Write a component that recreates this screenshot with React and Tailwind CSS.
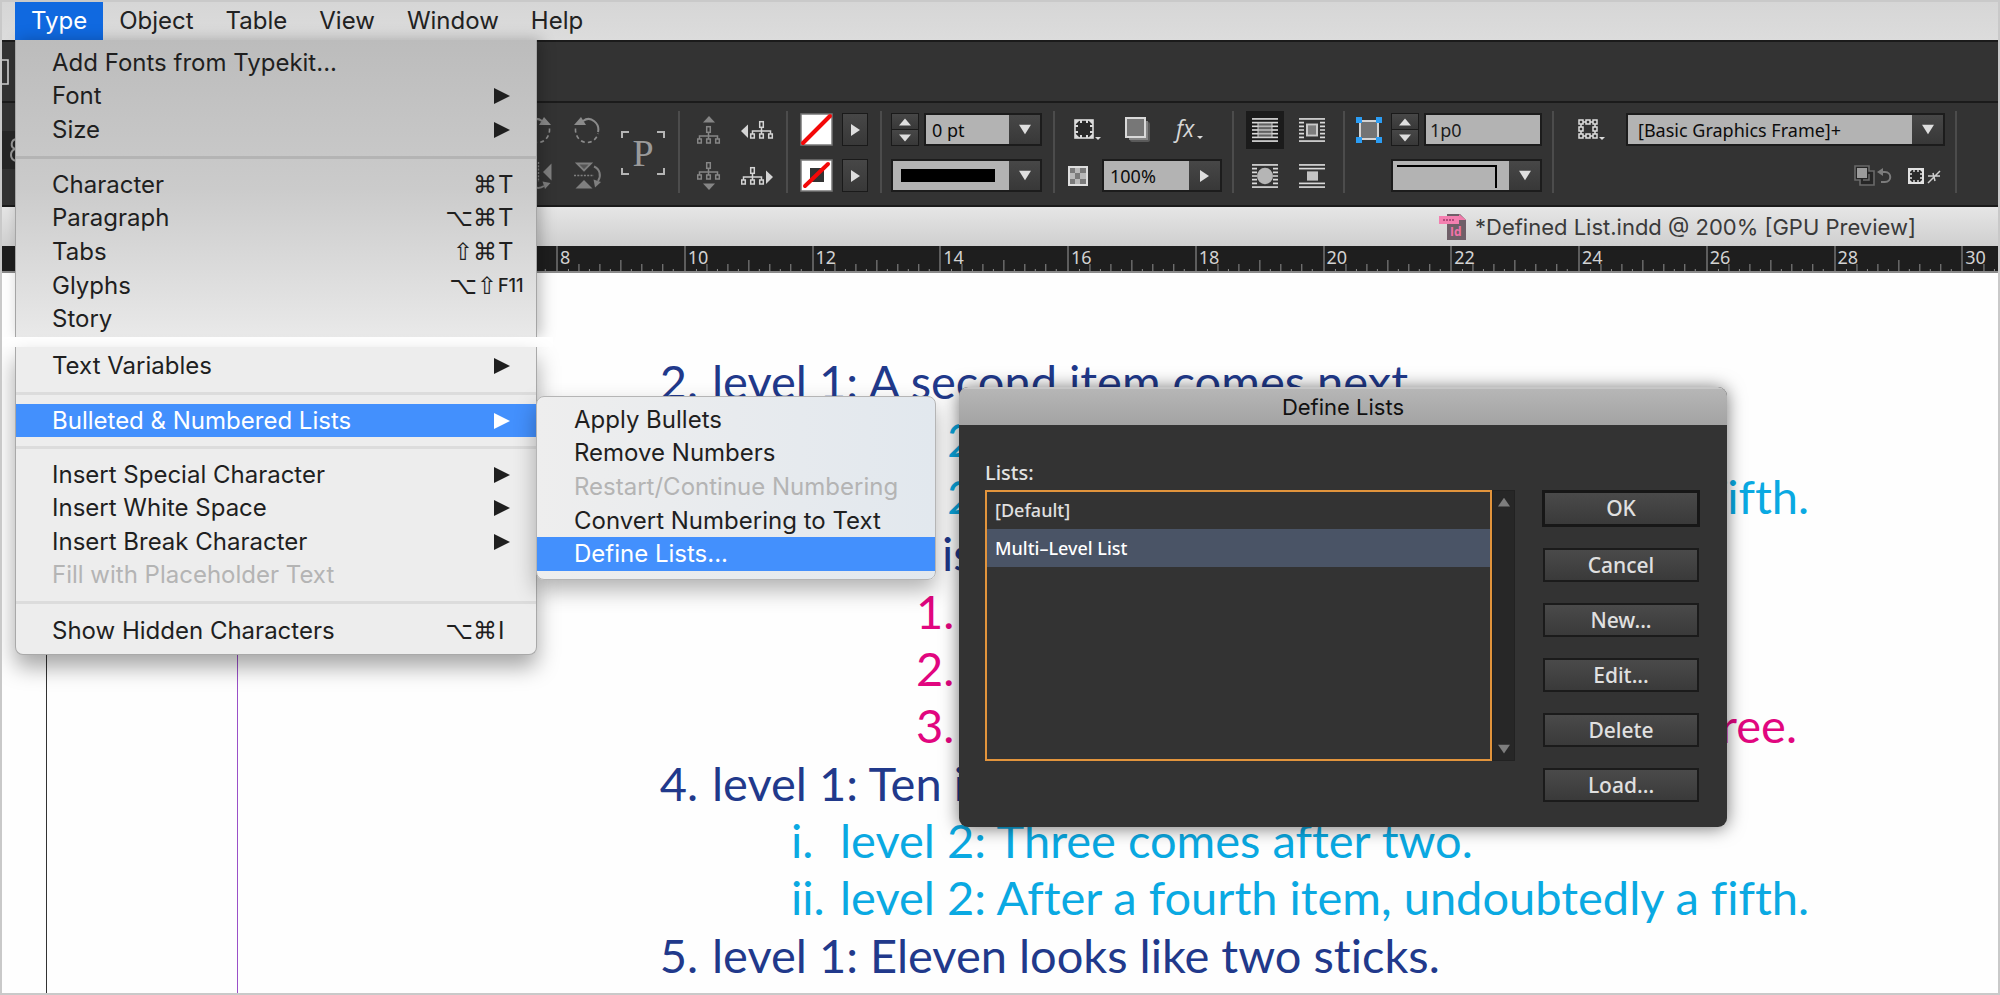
import React from "react";

const UI = "font-['Noto_Sans','Open_Sans',sans-serif]";
const MENU = "font-['Inter','Roboto',sans-serif]";
const PAGE = "font-['Lato','Open_Sans',sans-serif]";

/* ---------- small drawings ---------- */

function Triangle({ dir = "right", className = "" }) {
  const points = {
    right: "0,0 16,8 0,16",
    down: "0,1 16,1 8,15",
    up: "0,15 16,15 8,1",
  }[dir];
  return (
    <svg viewBox="0 0 16 16" preserveAspectRatio="none" className={`fill-current ${className}`} aria-hidden="true">
      <polygon points={points} />
    </svg>
  );
}

function RotateIcon({ flip }) {
  return (
    <svg width="26" height="28" viewBox="0 0 26 28" className="text-[#8b8b8b]" aria-hidden="true">
      <g transform={flip ? "translate(26 0) scale(-1 1)" : undefined} fill="none" stroke="currentColor">
        <path d="M9 5C17-1 26 8 24 16" strokeWidth="2" />
        <path d="M1.500 12.500C1 20 6 26.500 13 26.500C19 26.500 23 22 24 17.500" strokeWidth="1.600" strokeDasharray="4 3" />
        <path d="M0 9L7 1L12 9Z" fill="currentColor" stroke="none" />
      </g>
    </svg>
  );
}

function FlipIcon({ horizontal }) {
  return (
    <svg width="28" height="28" viewBox="0 0 28 28" className="text-[#7f7f7f]" aria-hidden="true">
      <g transform={horizontal ? "matrix(0 1 1 0 0 0)" : undefined} fill="none" stroke="currentColor">
        <path d="M3 1.500H17L10 8.500Z" fill="#555" strokeWidth="1.800" />
        <path d="M1.500 26.500H18.500L10 18Z" fill="currentColor" stroke="none" />
        <path d="M0 13.500H20" strokeWidth="1.300" strokeDasharray="2 1.300" />
        <path d="M20 4.500C26 7 27.500 14 24 19" strokeWidth="2" />
        <path d="M19.500 17.500L27 20L21 25.500Z" fill="currentColor" stroke="none" />
      </g>
    </svg>
  );
}

function ParagraphFrame() {
  return (
    <svg width="44" height="44" viewBox="0 0 44 44" aria-hidden="true">
      <path d="M1 7V1H8M36 1H43V7M43 37V43H36M8 43H1V37" fill="none" stroke="#b5b5b5" strokeWidth="2" />
      <text x="22" y="35" textAnchor="middle" fontSize="38" fill="#9a9a9a" fontFamily="'Liberation Serif', serif">
        P
      </text>
    </svg>
  );
}

function TreeShape({ x, y }) {
  return (
    <g transform={`translate(${x} ${y})`} fill="none" stroke="currentColor" strokeWidth="1.500">
      <rect x="9.700" y="0.700" width="3.600" height="5.600" />
      <path d="M11.500 6.500V10M2.500 13V10H20.500V13M11.500 10V13" />
      <rect x="0.700" y="13" width="3.600" height="4" />
      <rect x="9.700" y="13" width="3.600" height="4" />
      <rect x="18.700" y="13" width="3.600" height="4" />
    </g>
  );
}

function TreeIcon({ dir }) {
  if (dir === "up")
    return (
      <svg width="24" height="28" viewBox="0 0 24 28" className="text-[#868686]" aria-hidden="true">
        <path d="M6 6.500H18L12 0Z" fill="currentColor" />
        <TreeShape x={0} y={10} />
      </svg>
    );
  if (dir === "down")
    return (
      <svg width="24" height="28" viewBox="0 0 24 28" className="text-[#868686]" aria-hidden="true">
        <path d="M6 21.500H18L12 28Z" fill="currentColor" />
        <TreeShape x={0} y={0} />
      </svg>
    );
  return (
    <svg width="33" height="20" viewBox="0 0 33 20" className="text-[#d4d4d4]" aria-hidden="true">
      {dir === "left" ? (
        <path d="M7 4.500V18L0 11Z" fill="currentColor" />
      ) : (
        <path d="M25 4.500V18L32 11Z" fill="currentColor" />
      )}
      <TreeShape x={dir === "left" ? 9 : 0} y={1} />
    </svg>
  );
}

function FrameCornerIcon() {
  return (
    <svg width="28" height="22" viewBox="0 0 28 22" aria-hidden="true">
      <rect x="1" y="1" width="18" height="18" fill="#2a2a2a" stroke="#dcdcdc" strokeWidth="1.600" />
      <g fill="#dcdcdc">
        <path d="M6 1h2v3H6zM12 1h2v3h-2zM6 16h2v3H6zM12 16h2v3h-2zM1 6h3v2H1zM1 12h3v2H1zM16 6h3v2h-3zM16 12h3v2h-3z" />
        <path d="M1 1h5L1 6zM19 1v5l-5-5zM1 19v-5l5 5zM19 19h-5l5-5z" />
        <path d="M21 18h6l-3 3z" />
      </g>
    </svg>
  );
}

function ShadowIcon() {
  return (
    <svg width="26" height="26" viewBox="0 0 26 26" aria-hidden="true">
      <rect x="5" y="5" width="20" height="20" rx="2" fill="#5a5a5a" />
      <rect x="4" y="4" width="19" height="19" fill="#858585" />
      <rect x="1" y="1" width="19" height="19" fill="#777" stroke="#d9d9d9" strokeWidth="2" />
    </svg>
  );
}

function EffectsIcon() {
  return (
    <svg width="32" height="36" viewBox="0 0 32 36" className="overflow-visible" aria-hidden="true">
      <text x="3" y="25" fontSize="23" fontStyle="italic" fill="#d6d6d6" fontFamily="'Open Sans', sans-serif">
        fx
      </text>
      <path d="M24 24h6l-3 3z" fill="#dcdcdc" />
    </svg>
  );
}

function CheckerIcon() {
  return (
    <svg width="20" height="20" viewBox="0 0 20 20" aria-hidden="true">
      <rect width="20" height="20" fill="#dedede" />
      <path d="M2 2h5v5H2zM12 2h6v5h-6zM7 7h5v6H7zM2 13h5v5H2zM12 13h6v5h-6z" fill="#7b7b7b" />
      <path d="M7 2h5v5H7zM2 7h5v6H2zM12 7h6v6h-6zM7 13h5v5H7z" fill="#b9b9b9" />
    </svg>
  );
}

function WrapIcon({ kind }) {
  const rows = [1, 5, 9, 13, 17, 21, 25];
  return (
    <svg width="26" height="24" viewBox="0 0 26 26" preserveAspectRatio="none" aria-hidden="true">
      <g stroke="#dadada" strokeWidth="1.800">
        {rows.map((y, i) => {
          if (kind === "jump" && i > 1 && i < 5) return null;
          if ((kind === "box" || kind === "shape") && i > 0 && i < 6)
            return <path key={y} d={`M0 ${y}H5M21 ${y}H26`} />;
          return <path key={y} d={`M0 ${y}H26`} />;
        })}
      </g>
      {kind === "none" && <rect x="6" y="5" width="14" height="16" fill="#9b9b9b" fillOpacity="0.550" stroke="#cfcfcf" />}
      {kind === "box" && <rect x="8" y="7" width="10" height="12" fill="#7d7d7d" stroke="#c9c9c9" strokeWidth="2" />}
      {kind === "shape" && <ellipse cx="13" cy="13" rx="8" ry="9" fill="#b5b5b5" />}
      {kind === "jump" && <rect x="8" y="8" width="11" height="10" fill="#c4c4c4" />}
    </svg>
  );
}

function BlueFrameIcon() {
  return (
    <svg width="26" height="26" viewBox="0 0 26 26" aria-hidden="true">
      <rect x="4" y="4" width="18" height="18" fill="#747474" stroke="#d4d4d4" strokeWidth="2" />
      <path d="M0 0h6v6H0zM20 0h6v6h-6zM0 20h6v6H0zM20 20h6v6h-6z" fill="#2b9df4" />
    </svg>
  );
}

function DottedFrameIcon() {
  return (
    <svg width="28" height="22" viewBox="0 0 28 22" aria-hidden="true">
      <g fill="none" stroke="#dedede" strokeWidth="1.500">
        <path d="M1 1h4v4H1zM8 1h4v4H8zM15 1h4v4h-4zM1 8h4v4H1zM15 8h4v4h-4zM1 15h4v4H1zM8 15h4v4H8zM15 15h4v4h-4z" />
        <path d="M5 3h3M12 3h3M5 17h3M12 17h3M3 5v3M3 12v3M17 5v3M17 12v3" />
      </g>
      <path d="M21 18h6l-3 3z" fill="#dcdcdc" />
    </svg>
  );
}

function ClearOverrideIcon() {
  return (
    <svg width="38" height="22" viewBox="0 0 38 22" aria-hidden="true">
      <path d="M1 1h14v5h5v14H6v-5H1z" fill="#262626" stroke="#6a6a6a" strokeWidth="1.600" />
      <rect x="3" y="3" width="10" height="10" fill="#9c9c9c" />
      <path d="M15 9v6H9" fill="none" stroke="#6a6a6a" strokeWidth="1.500" />
      <path d="M27 7h4c7 0 7 10 0 10h-4" fill="none" stroke="#7c7c7c" strokeWidth="2" />
      <path d="M23 7l6-4v8z" fill="#7c7c7c" />
    </svg>
  );
}

function DetachIcon() {
  return (
    <svg width="33" height="18" viewBox="0 0 33 18" aria-hidden="true">
      <rect x="1" y="2" width="14" height="14" fill="#2a2a2a" stroke="#e2e2e2" strokeWidth="2" />
      <path d="M1 2h4L1 6zM15 2v4l-4-4zM1 16v-4l4 4zM15 16h-4l4-4z" fill="#e2e2e2" />
      <path
        d="M6 2v3M10 2v3M6 13v3M10 13v3M1 7h3M1 11h3M12 7h3M12 11h3"
        stroke="#e2e2e2"
        strokeWidth="1.400"
      />
      <path d="M20 16L32 4M25 6l2 8M20 9h12" stroke="#cfcfcf" strokeWidth="1.500" />
    </svg>
  );
}

function NoneSwatch({ stroke }) {
  return (
    <svg width="33" height="33" viewBox="0 0 33 33" aria-hidden="true">
      <rect x="1" y="1" width="31" height="31" fill="#fff" stroke="#777" strokeWidth="1.500" />
      {stroke && <rect x="10" y="9" width="14" height="14" fill="#333" />}
      <path d={stroke ? "M5 27L28 5" : "M3 30L30 3"} stroke="#f30808" strokeWidth="4" strokeLinecap="round" />
    </svg>
  );
}

function DocumentIcon() {
  return (
    <svg width="28" height="28" viewBox="0 0 28 28" aria-hidden="true">
      <path d="M8 1h13l6 6v20H8z" fill="#6f5f68" />
      <path d="M20 1l7 6h-7z" fill="#f07cab" />
      <rect x="0" y="3" width="20" height="8" fill="#f47fb0" />
      <path d="M4 7h12" stroke="#b34c7d" strokeWidth="2" strokeDasharray="2 1" />
      <text x="11" y="23" fontSize="12" fontWeight="700" fill="#f272a8" fontFamily="'Open Sans', sans-serif">
        Id
      </text>
    </svg>
  );
}

/* ---------- control bar ---------- */

function Group({ className = "", top, bottom, rowClass = "" }) {
  return (
    <div className={`flex shrink-0 flex-col gap-[13px] border-r-2 border-[#4c4c4c] pt-[2px] pb-px ${className}`}>
      <div className={`flex h-[33px] items-center ${rowClass}`}>{top}</div>
      <div className={`flex h-[33px] items-center ${rowClass}`}>{bottom}</div>
    </div>
  );
}

function IconButton({ label, active, className = "", children }) {
  return (
    <button
      type="button"
      aria-label={label}
      className={`flex shrink-0 items-center justify-center ${active ? "bg-[#1b1b1b]" : ""} ${className}`}
    >
      {children}
    </button>
  );
}

const darkButton = "flex items-center justify-center bg-linear-to-b from-[#474747] to-[#383838] text-[#dedede]";

function ArrowButton({ label }) {
  return (
    <button type="button" aria-label={label} className={`${darkButton} h-[33px] w-[26px] border border-[#1a1a1a]`}>
      <Triangle className="h-3 w-[9px]" />
    </button>
  );
}

function Spinner({ label }) {
  return (
    <div className="flex h-[33px] w-7 shrink-0 flex-col border border-[#1a1a1a]">
      <button type="button" aria-label={`Increase ${label}`} className={`${darkButton} flex-1 border-b border-[#1a1a1a]`}>
        <Triangle dir="up" className="h-2 w-3" />
      </button>
      <button type="button" aria-label={`Decrease ${label}`} className={`${darkButton} flex-1`}>
        <Triangle dir="down" className="h-2 w-3" />
      </button>
    </div>
  );
}

function Combo({ label, value, dir = "down", className = "", inputClass = "px-[6px]", children }) {
  return (
    <div className={`flex h-[33px] shrink-0 border-2 border-[#1c1c1c] ${className}`}>
      {children ?? (
        <input
          aria-label={label}
          defaultValue={value}
          className={`min-w-0 flex-1 bg-[#b3b3b3] text-lg text-[#0c0c0c] outline-none ${UI} ${inputClass}`}
        />
      )}
      <button type="button" aria-label={`${label} options`} className={`${darkButton} w-[31px] shrink-0`}>
        <Triangle dir={dir} className={dir === "down" ? "h-[11px] w-3" : "h-3 w-[9px]"} />
      </button>
    </div>
  );
}

function ControlBar() {
  return (
    <div className="flex overflow-hidden border-t-2 border-b-2 border-[#1b1b1b] bg-[#333333] pt-2 pb-3">
      <svg width="523" height="38" viewBox="0 0 523 38" className="mt-5 shrink-0" aria-hidden="true">
        <rect width="523" height="38" fill="#262626" />
        <path d="M14 8C9 9 8 16 13 18C8 20 7 28 14 30" fill="none" stroke="#9a9a9a" strokeWidth="2" />
      </svg>
      <Group
        className="pr-[13px]"
        top={
          <>
            <IconButton label="Rotate clockwise"><RotateIcon flip /></IconButton>
            <IconButton label="Rotate counter-clockwise" className="ml-[23px]"><RotateIcon /></IconButton>
            <IconButton label="Paragraph" className="mt-[46px] ml-[21px]"><ParagraphFrame /></IconButton>
          </>
        }
        bottom={
          <>
            <IconButton label="Flip horizontal"><FlipIcon horizontal /></IconButton>
            <IconButton label="Flip vertical" className="ml-[21px]"><FlipIcon /></IconButton>
          </>
        }
      />
      <Group
        className="pr-3 pl-[17px]"
        rowClass="gap-5"
        top={
          <>
            <IconButton label="Select container"><TreeIcon dir="up" /></IconButton>
            <IconButton label="Select previous object"><TreeIcon dir="left" /></IconButton>
          </>
        }
        bottom={
          <>
            <IconButton label="Select content"><TreeIcon dir="down" /></IconButton>
            <IconButton label="Select next object"><TreeIcon dir="right" /></IconButton>
          </>
        }
      />
      <Group
        className="px-3"
        rowClass="gap-[9px]"
        top={
          <>
            <IconButton label="Fill"><NoneSwatch /></IconButton>
            <ArrowButton label="Fill options" />
          </>
        }
        bottom={
          <>
            <IconButton label="Stroke"><NoneSwatch stroke /></IconButton>
            <ArrowButton label="Stroke options" />
          </>
        }
      />
      <Group
        className="pr-[11px] pl-[9px]"
        top={
          <>
            <Spinner label="stroke weight" />
            <Combo label="Stroke weight" value="0 pt" className="ml-[5px] w-[118px]" />
          </>
        }
        bottom={
          <Combo label="Stroke type" className="w-[151px]">
            <div className="flex flex-1 items-center bg-[#b3b3b3] pr-[14px] pl-2">
              <div className="h-[13px] flex-1 bg-black" />
            </div>
          </Combo>
        }
      />
      <Group
        className="pr-[10px] pl-[13px]"
        top={
          <>
            <IconButton label="Corner options" className="ml-[6px]"><FrameCornerIcon /></IconButton>
            <IconButton label="Drop shadow" className="ml-[23px]"><ShadowIcon /></IconButton>
            <IconButton label="Effects" className="ml-[22px]"><EffectsIcon /></IconButton>
          </>
        }
        bottom={
          <>
            <CheckerIcon />
            <Combo label="Opacity" value="100%" dir="right" className="ml-[14px] w-[120px]" />
          </>
        }
      />
      <Group
        className="px-3"
        rowClass="gap-[9px]"
        top={
          <>
            <IconButton label="No text wrap" active className="size-[38px]"><WrapIcon kind="none" /></IconButton>
            <IconButton label="Wrap around bounding box" className="size-[38px]"><WrapIcon kind="box" /></IconButton>
          </>
        }
        bottom={
          <>
            <IconButton label="Wrap around object shape" className="size-[38px]"><WrapIcon kind="shape" /></IconButton>
            <IconButton label="Jump object" className="size-[38px]"><WrapIcon kind="jump" /></IconButton>
          </>
        }
      />
      <Group
        className="pr-[10px] pl-[11px]"
        rowClass="justify-end"
        top={
          <>
            <IconButton label="Corner shape"><BlueFrameIcon /></IconButton>
            <div className="ml-[9px] flex gap-[5px]">
              <Spinner label="corner size" />
              <input
                aria-label="Corner size"
                defaultValue="1p0"
                className={`h-[33px] w-[118px] border-2 border-[#1c1c1c] bg-[#b3b3b3] px-1 text-lg text-[#1c1c1c] outline-none ${UI}`}
              />
            </div>
          </>
        }
        bottom={
          <Combo label="Corner style" className="w-[151px]">
            <div className="flex-1 bg-[#b3b3b3] pt-[4px] pr-[12px] pb-[3px] pl-1">
              <div className="h-[23px] border-t-2 border-r-2 border-black" />
            </div>
          </Combo>
        }
      />
      <Group
        className="pr-[10px] pl-[24px]"
        rowClass="justify-end"
        top={
          <>
            <IconButton label="Reference point"><DottedFrameIcon /></IconButton>
            <Combo label="Object style" value="[Basic Graphics Frame]+" className="ml-5 w-[319px]" inputClass="px-[10px]" />
          </>
        }
        bottom={
          <>
            <IconButton label="Clear overrides"><ClearOverrideIcon /></IconButton>
            <IconButton label="Break link to style" className="mr-1 ml-4"><DetachIcon /></IconButton>
          </>
        }
      />
    </div>
  );
}

/* ---------- ruler ---------- */

const FIRST_LABEL = 8;

function Ruler() {
  const cells = Array.from({ length: 16 }, (_, i) => i * 2);
  return (
    <div className="overflow-hidden border-b-2 border-[#8a8a8a] bg-[#1e1e1e] pl-[43px]">
      <div className="grid w-[2044px] grid-cols-16">
        {cells.map((n) => (
          <div key={n} className={`relative h-[25px] border-l-2 border-[#5d5d5d] pl-[2px] text-lg leading-[22px] text-[#d2d2d2] ${UI}`}>
            {n >= FIRST_LABEL && n}
            <svg className="absolute inset-0 size-full" aria-hidden="true">
              {Array.from({ length: 11 }, (_, k) => k + 1).map((k) => (
                <line
                  key={k}
                  x1={`${(k * 100) / 12}%`}
                  x2={`${(k * 100) / 12}%`}
                  y1={k === 6 ? 14 : k % 2 ? 23 : 18}
                  y2="25"
                  stroke="#8f8f8f"
                />
              ))}
            </svg>
          </div>
        ))}
      </div>
    </div>
  );
}

/* ---------- menus ---------- */

function MenuItem({ label, submenu, mods, keyName, small, active, disabled, indent = "pl-9" }) {
  const tone = active ? "bg-[#4390fd] text-white" : disabled ? "text-[#b4b4b4]" : "text-[#1f1f1f]";
  return (
    <button
      type="button"
      role="menuitem"
      disabled={disabled}
      className={`flex items-center text-left whitespace-nowrap ${indent} ${tone}`}
    >
      <span className="flex-1">{label}</span>
      {submenu && <Triangle className="mr-[26px] size-4" />}
      {keyName && (
        <>
          <span className="font-['DejaVu_Sans',sans-serif] text-[24px]">{mods}</span>
          <span className={`w-[39px] pl-px ${small ? "text-lg font-medium" : ""}`}>{keyName}</span>
        </>
      )}
    </button>
  );
}

function Separator({ dark }) {
  return <div role="separator" className={`h-[3px] ${dark ? "bg-[#b4b4b4]" : "bg-[#dcdcdc]"}`} />;
}

function TypeMenu() {
  return (
    <div role="menu" aria-label="Type" className={`absolute top-full left-0 z-20 w-[522px] text-[24px] leading-none ${MENU}`}>
      <div className="border-x border-[#a5a5a5] bg-linear-to-b from-[#bcbcbc] via-[#cbcbcb] to-[#e9e9e9] pt-[6px] pb-px shadow-[4px_0_14px_rgba(0,0,0,0.25)]">
        <div className="grid h-[101px] auto-rows-fr">
          <MenuItem label="Add Fonts from Typekit..." />
          <MenuItem label="Font" submenu />
          <MenuItem label="Size" submenu />
        </div>
        <div className="py-[9px]"><Separator dark /></div>
        <div className="grid h-[168px] auto-rows-fr">
          <MenuItem label="Character" mods="⌘" keyName="T" />
          <MenuItem label="Paragraph" mods="⌥⌘" keyName="T" />
          <MenuItem label="Tabs" mods="⇧⌘" keyName="T" />
          <MenuItem label="Glyphs" mods="⌥⇧" keyName="F11" small />
          <MenuItem label="Story" />
        </div>
      </div>
      <div className="relative -mr-4 -ml-[13px] h-[10px] bg-white" />
      <div className="relative rounded-b-lg border-x border-b border-[#a9a9a9] bg-[#ededed] shadow-[0_12px_22px_rgba(0,0,0,0.35)]">
        <div className="grid h-[37px] auto-rows-fr"><MenuItem label="Text Variables" submenu /></div>
        <div className="pt-2 pb-[9px]"><Separator /></div>
        <div className="relative grid h-[33px] auto-rows-fr">
          <MenuItem label="Bulleted & Numbered Lists" submenu active />
          <ListsSubmenu />
        </div>
        <div className="py-[9px]"><Separator /></div>
        <div className="grid h-[134px] auto-rows-fr">
          <MenuItem label="Insert Special Character" submenu />
          <MenuItem label="Insert White Space" submenu />
          <MenuItem label="Insert Break Character" submenu />
          <MenuItem label="Fill with Placeholder Text" disabled />
        </div>
        <div className="pt-[9px] pb-[10px]"><Separator /></div>
        <div className="grid h-[33px] auto-rows-fr"><MenuItem label="Show Hidden Characters" mods="⌥⌘" keyName="I" /></div>
        <div className="h-[7px]" />
      </div>
    </div>
  );
}

function ListsSubmenu() {
  return (
    <div
      role="menu"
      aria-label="Bulleted & Numbered Lists"
      className="absolute -top-2 left-full grid h-[184px] w-[400px] auto-rows-fr rounded-lg border border-[#b5b5b5] bg-linear-to-r from-[#eeeeee] to-[#e2e8ee] pt-[6px] pb-2 shadow-[0_10px_22px_rgba(0,0,0,0.3)]"
    >
      <MenuItem indent="pl-[37px]" label="Apply Bullets" />
      <MenuItem indent="pl-[37px]" label="Remove Numbers" />
      <MenuItem indent="pl-[37px]" label="Restart/Continue Numbering" disabled />
      <MenuItem indent="pl-[37px]" label="Convert Numbering to Text" />
      <MenuItem indent="pl-[37px]" label="Define Lists..." active />
    </div>
  );
}

function MenuBar() {
  const others = ["Object", "Table", "View", "Window", "Help"];
  return (
    <nav className={`flex h-[38px] bg-linear-to-b from-[#d6d6d6] to-[#dcdcdc] pl-[13px] text-[24px] leading-none text-[#222] ${MENU}`}>
      <div className="relative flex">
        <button type="button" className="bg-[#1069e0] px-4 text-white">Type</button>
        <TypeMenu />
      </div>
      {others.map((name) => (
        <button key={name} type="button" className="px-4">{name}</button>
      ))}
    </nav>
  );
}

/* ---------- page ---------- */

const levels = {
  1: { row: "text-[#21398b]", marker: "w-[54px] pr-[14px] text-right", indent: "pl-[656px]" },
  2: { row: "text-[#0aa9e2]", marker: "w-[49px]", indent: "pl-[789px]" },
  3: { row: "text-[#e1067f]", marker: "w-[49px]", indent: "pl-[914px]" },
};

const lines = [
  { level: 1, marker: "2.", text: "level 1: A second item comes next" },
  { level: 2, marker: "i.", text: "level 2:" },
  { level: 2, marker: "ii.", text: "level 2: After a fourth item, undoubtedly a fifth." },
  { level: 1, marker: "3.", text: "level 1: Six is" },
  { level: 3, marker: "1.", text: "" },
  { level: 3, marker: "2.", text: "" },
  { level: 3, marker: "3.", text: "three.", end: true },
  { level: 1, marker: "4.", text: "level 1: Ten is" },
  { level: 2, marker: "i.", text: "level 2: Three comes after two." },
  { level: 2, marker: "ii.", text: "level 2: After a fourth item, undoubtedly a fifth." },
  { level: 1, marker: "5.", text: "level 1: Eleven looks like two sticks." },
];

function PageText() {
  return (
    <div className={`grid h-[631px] auto-rows-fr text-[47px] leading-none [font-variant-ligatures:none] ${PAGE}`}>
      {lines.map((line, i) => {
        const s = levels[line.level];
        return (
          <div key={i} className={`flex items-center whitespace-nowrap ${s.row} ${s.indent}`}>
            <span className={`shrink-0 ${s.marker}`}>{line.marker}</span>
            <span className={line.end ? "w-[832px] text-right" : ""}>{line.text}</span>
          </div>
        );
      })}
    </div>
  );
}

/* ---------- dialog ---------- */

function DefineListsDialog() {
  const buttons = ["Cancel", "New...", "Edit...", "Delete", "Load..."];
  return (
    <section
      role="dialog"
      aria-labelledby="define-lists-title"
      className={`absolute top-[114px] left-[957px] z-10 w-[768px] overflow-hidden rounded-[9px] bg-[#333333] shadow-[0_1px_18px_rgba(0,0,0,0.55)] ${UI}`}
    >
      <h2
        id="define-lists-title"
        className={`h-[38px] border-t-2 border-[#c6c6c6] bg-linear-to-b from-[#b6b6b6] to-[#a3a3a3] text-center text-[22px] leading-[36px] text-[#111] ${MENU}`}
      >
        Define Lists
      </h2>
      <div className="flex pt-[31px] pr-[27px] pb-[25px] pl-[26px]">
        <div className="w-[530px]">
          <div id="lists-label" className="h-[34px] text-xl leading-[34px] font-medium text-[#e2e2e2]">Lists:</div>
          <div className="flex h-[271px]">
            <ul
              role="listbox"
              aria-labelledby="lists-label"
              className="flex-1 border-2 border-[#e2943c] text-lg font-medium text-[#e0e0e0]"
            >
              <li role="option" aria-selected="false" className="h-[37px] px-2 leading-[37px]">[Default]</li>
              <li role="option" aria-selected="true" className="h-[38px] bg-[#4a5466] px-2 leading-[38px] text-white">
                Multi–Level List
              </li>
            </ul>
            <div className="flex w-[23px] flex-col items-center justify-between border border-[#222] bg-[#272727] py-[6px] text-[#7d7d7d]">
              <Triangle dir="up" className="h-[10px] w-3" />
              <Triangle dir="down" className="h-[10px] w-3" />
            </div>
          </div>
        </div>
        <div className="ml-auto flex w-[158px] flex-col gap-[21px] pt-[34px] text-[21px] font-medium text-[#e0e0e0]">
          <button type="button" className="h-[37px] border-[3px] border-[#171717] bg-linear-to-b from-[#4a4a4a] to-[#3a3a3a] leading-none">
            OK
          </button>
          {buttons.map((name) => (
            <button
              key={name}
              type="button"
              className="mx-px h-[34px] border-2 border-[#1b1b1b] bg-linear-to-b from-[#4a4a4a] to-[#3a3a3a] leading-none"
            >
              {name}
            </button>
          ))}
        </div>
      </div>
    </section>
  );
}

export default function App() {
  return (
    <div className="flex min-h-screen flex-col overflow-hidden border-2 border-[#c9c9c9] bg-white">
      <MenuBar />
      <div className="flex h-[61px] items-center border-t-2 border-[#1b1b1b] bg-[#333333]">
        <svg width="8" height="26" viewBox="0 0 8 26" aria-hidden="true">
          <path d="M0 1H6V25H0" fill="none" stroke="#cfcfcf" strokeWidth="1.600" />
        </svg>
      </div>
      <ControlBar />
      <div className="flex h-[39px] items-center justify-end bg-linear-to-b from-[#e6e6e6] to-[#cfcfcf] pt-px pr-[82px]">
        <DocumentIcon />
        <h1 className={`ml-2 text-[22px] text-[#3a3a3a] ${MENU}`}>*Defined List.indd @ 200% [GPU Preview]</h1>
      </div>
      <Ruler />
      <main className="relative flex flex-1 bg-[#fefefe]">
        <div className="absolute inset-y-0 left-11 w-px bg-[#333]" />
        <div className="absolute inset-y-0 left-[235px] w-px bg-[#9a50c8]" />
        <div className="flex-1 pt-[80px]">
          <PageText />
        </div>
        <DefineListsDialog />
      </main>
    </div>
  );
}
